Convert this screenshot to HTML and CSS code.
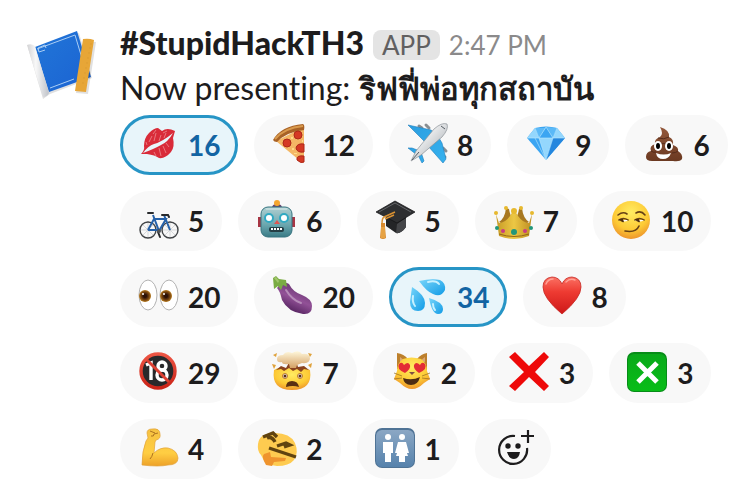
FILE: index.html
```html
<!DOCTYPE html>
<html lang="en">
<head>
<meta charset="utf-8">
<meta name="viewport" content="width=device-width, initial-scale=1">
<title>#StupidHackTH3</title>
<link rel="stylesheet" href="styles.css">
</head>
<body>
<svg class="defs" aria-hidden="true">
  <defs>
    <linearGradient id="blueprint" x1="0" y1="0" x2="1" y2="1"><stop offset="0" stop-color="#2176d8"/><stop offset="1" stop-color="#1b62d2"/></linearGradient>
    <linearGradient id="roll" x1="0" y1="0" x2="1" y2="0"><stop offset="0" stop-color="#d2d2d4"/><stop offset=".4" stop-color="#f8f8f8"/><stop offset="1" stop-color="#bfc2c8"/></linearGradient>
    <linearGradient id="wing" x1="0" y1="0" x2="1" y2="1"><stop offset="0" stop-color="#2b9ee0"/><stop offset="1" stop-color="#35b1ee"/></linearGradient>
    <linearGradient id="hull" x1="0" y1="0" x2="1" y2="1"><stop offset=".3" stop-color="#f4f5f6"/><stop offset="1" stop-color="#9aa0a5"/></linearGradient>
    <linearGradient id="poop" x1="0" y1="0" x2="0" y2="1"><stop offset="0" stop-color="#93583b"/><stop offset="1" stop-color="#6b3921"/></linearGradient>
    <linearGradient id="robot" x1="0" y1="0" x2="0" y2="1"><stop offset="0" stop-color="#b0d0d2"/><stop offset=".6" stop-color="#6aa6ae"/><stop offset="1" stop-color="#397a85"/></linearGradient>
    <linearGradient id="gold" x1="0" y1="0" x2="1" y2="0"><stop offset="0" stop-color="#c79a27"/><stop offset=".5" stop-color="#ecc744"/><stop offset="1" stop-color="#bd8d22"/></linearGradient>
    <radialGradient id="face" cx=".5" cy=".3" r=".7"><stop offset="0" stop-color="#ffec62"/><stop offset=".65" stop-color="#fdca35"/><stop offset="1" stop-color="#ed952c"/></radialGradient>
    <radialGradient id="iris"><stop offset=".25" stop-color="#2b1007"/><stop offset=".65" stop-color="#71400f"/><stop offset="1" stop-color="#b77b20"/></radialGradient>
    <linearGradient id="eggplant" x1=".7" y1=".1" x2=".3" y2=".9"><stop offset="0" stop-color="#65346f"/><stop offset=".5" stop-color="#925197"/><stop offset="1" stop-color="#51215c"/></linearGradient>
    <linearGradient id="drop" x1="0" y1="0" x2="1" y2="1"><stop offset="0" stop-color="#79d6fa"/><stop offset="1" stop-color="#119be6"/></linearGradient>
    <linearGradient id="heart" x1="0" y1="0" x2="0" y2="1"><stop offset="0" stop-color="#fb7163"/><stop offset=".4" stop-color="#ee3b32"/><stop offset="1" stop-color="#ce1718"/></linearGradient>
    <linearGradient id="ban" x1="0" y1="0" x2="0" y2="1"><stop offset="0" stop-color="#ed5544"/><stop offset="1" stop-color="#cb2418"/></linearGradient>
    <linearGradient id="cloud" x1="0" y1="0" x2="0" y2="1"><stop offset="0" stop-color="#fff8dc"/><stop offset="1" stop-color="#d4a064"/></linearGradient>
    <linearGradient id="green" x1="0" y1="0" x2="0" y2="1"><stop offset="0" stop-color="#09a91a"/><stop offset="1" stop-color="#08bd17"/></linearGradient>
    <linearGradient id="arm" x1="0" y1="0" x2="0" y2="1"><stop offset="0" stop-color="#f6c241"/><stop offset=".65" stop-color="#ffce43"/><stop offset="1" stop-color="#eda129"/></linearGradient>
    <linearGradient id="sign" x1="0" y1="0" x2="0" y2="1"><stop offset="0" stop-color="#8ba7c4"/><stop offset="1" stop-color="#5682ac"/></linearGradient>
  </defs>
</svg>

<main class="message">
  <svg class="avatar" viewBox="0 0 72 72" aria-hidden="true">
    <path class="shade" d="M4 21 12 21 55 6 68 51 26 67 19 72Z"/>
    <path fill="url(#blueprint)" d="M11 20 53 4 67 50 25 65Z"/>
    <path fill="none" stroke="#a9cdf4" d="M13 22 51 8 63 48M22 21l-1-3-7 3 1 4 6-2M26 61l24-9"/>
    <path fill="url(#roll)" d="M3 18q4-2 8 1l14 47q-2 4-6 4Z"/>
    <path class="shade" d="M60 14l12 1-8 52-12-1Z"/>
    <path fill="#e7a637" d="M59 12q6-1 11 1l-8 52-11-1Z"/>
    <path stroke="#d99a30" stroke-width=".7" d="M68 17h-2m1 4h-2m1 5h-2m1 5h-2m1 5h-2m1 5h-2m1 5h-2m1 5h-2m1 5h-2"/>
  </svg>

  <div class="content">
    <header class="meta">
      <h1 class="author">#StupidHackTH3</h1>
      <span class="badge">APP</span>
      <time class="time" datetime="14:47">2:47 PM</time>
    </header>
    <p class="text">Now presenting: <strong class="thai" lang="th">ริฟฟี่พ่อทุกสถาบัน</strong></p>

    <div class="reactions">
      <button class="pill selected" type="button" aria-pressed="true">
        <svg class="icon" viewBox="0 0 40 40" aria-hidden="true">
          <path fill="#d92b39" d="M3 30Q7 26 6 22 6 14 11 9 16 4 20 4L24 7Q29 3 37 7L35 14Q37 23 33 28 27 35 21 34 17 31 9 30Z"/>
          <path fill="#e8f5fa" d="M5 29Q10 22 16 20 24 18 35 9 30 18 23 21 16 25 5 29Z"/>
          <path fill="none" stroke="#ec8a8f" stroke-width=".8" d="M11 18l3-6m2 5 2-8m3 8 2-6m3 3 2-5m-12 19 2 4m3-8 2 8m2-10 3 7m0-10 3 4M9 21l-1-3m7-8 3-4m7 3 4-2"/>
        </svg><span>16</span>
      </button>
      <button class="pill" type="button" aria-pressed="false">
        <svg class="icon" viewBox="0 0 40 40" aria-hidden="true">
          <path fill="#f4b765" d="M4 17 32 3V38Q30 40 27 36Z"/>
          <path fill="#a86226" d="M1 16Q9 2 31 0q2 1 1 6Q14 8 5 18 2 18 1 16Z"/>
          <path fill="none" stroke="#d99a4d" stroke-width="2" d="M3 15Q12 4 31 2"/>
          <g fill="#d53924" stroke="#ae2819"><circle cx="15" cy="19" r="4"/><circle cx="26" cy="11" r="4"/><path d="M32 20q-7-1-8 4 1 5 8 4ZM32 32q-8-1-7 4 4 4 7 2Z"/></g>
          <path fill="#ffda86" d="M19 13h2v2h-2zM20 24h2v2h-2zM30 16h1v2h-1zM22 29h3v1h-3z"/>
        </svg><span>12</span>
      </button>
      <button class="pill" type="button" aria-pressed="false">
        <svg class="icon" viewBox="0 0 40 40" aria-hidden="true">
          <path stroke="#898e92" stroke-width="3" stroke-linecap="round" d="M12 2l3 2m4-3 3 3m14 20 3 3m-4 4 3 2"/>
          <path fill="url(#wing)" stroke="#1e7ebe" stroke-width=".6" d="M1 1 24 6 29 10 19 19ZM32 14 35 19 39 35 36 39 21 22ZM1 24h4l8 3-3 4ZM14 28l3 9-2 2-5-10Z"/>
          <path fill="url(#hull)" stroke="#8b9197" stroke-width=".7" d="M4 37 9 27 27 5Q35-2 40 0q2 5-5 13L14 31Z"/>
          <path fill="none" stroke="#565c63" d="M34 2l4 3M12 28l-7 8"/>
        </svg><span>8</span>
      </button>
      <button class="pill" type="button" aria-pressed="false">
        <svg class="icon" viewBox="0 0 40 40" aria-hidden="true">
          <path fill="#3ba5f2" d="M2 14 10 4Q21 1 32 4l8 10-19 22Z"/>
          <path fill="#94d7fd" d="M10 4l4 10H2zM32 4l-4 10h12zM14 14h14l-7 22Z"/>
          <path fill="#5bb9f7" d="M10 4h11l-7 10zM21 3l11 1-4 10z"/>
          <path fill="#2587de" d="M28 14h12L21 36z"/>
          <path fill="none" stroke="#bce9ff" stroke-width=".6" d="M2 14h38M10 4l4 10 7-11 7 11 4-10M14 14l7 22 7-22M10 14l11 22"/>
        </svg><span>9</span>
      </button>
      <button class="pill" type="button" aria-pressed="false">
        <svg class="icon" viewBox="0 0 40 40" aria-hidden="true">
          <path fill="url(#poop)" d="M17 3q10 3 9 10 5 2 4 8 6 2 5 6 5 3 4 8-2 3-9 2H9q-6 0-6-4 0-5 5-6-2-5 4-7-1-5 5-7 4-3 0-10Z"/>
          <path fill="none" stroke="#552b1a" d="M15 14q6 2 11-1M12 21q8-3 18 0M8 27q3 2 5 1m16 1q4 0 6-2"/>
          <g fill="#fff"><ellipse cx="15" cy="22" rx="4" ry="5"/><ellipse cx="26" cy="22" rx="4" ry="5"/><path d="M13 29q8 3 15 0-2 6-8 6t-7-6Z"/></g>
          <ellipse cx="15" cy="22" rx="2" ry="3"/><ellipse cx="26" cy="22" rx="2" ry="3"/>
        </svg><span>6</span>
      </button>
      <button class="pill" type="button" aria-pressed="false">
        <svg class="icon" viewBox="0 0 40 40" aria-hidden="true">
          <g fill="none" stroke="#b5b9bd" stroke-width=".5"><path d="M2 30h17M10 21v17M4 24l12 12M4 36l12-12M24 30h16M32 21v17M26 24l12 12M26 36l12-12"/></g>
          <g fill="none" stroke="#414447" stroke-width="1.4"><circle cx="10" cy="30" r="8"/><circle cx="32" cy="30" r="8"/></g>
          <path fill="none" stroke="#2661a9" stroke-width="2" d="M10 30 16 19H28L21 31 15 15M10 30h11M26 15l6 15"/>
          <path fill="none" stroke="#292b2e" stroke-width="2" stroke-linecap="round" d="M10 13h5M24 15h6l1 2M20 32l2 5"/>
          <circle cx="21" cy="31" r="2" fill="#505459"/>
        </svg><span>5</span>
      </button>
      <button class="pill" type="button" aria-pressed="false">
        <svg class="icon" viewBox="0 0 40 40" aria-hidden="true">
          <path fill="#a73544" d="M2 17h4v10H2zM35 17h4v10h-4z"/>
          <path fill="#67436e" d="M16 8q0-4 5-4t5 4z"/><circle cx="21" cy="3" r="3" fill="#f5a62f"/>
          <rect x="5" y="7" width="31" height="30" rx="7" fill="url(#robot)" stroke="#377480"/>
          <path fill="none" stroke="#d8e9e8" d="M10 9h21"/>
          <g fill="#fff" stroke="#31a9c2" stroke-width="2"><circle cx="13" cy="18" r="4"/><circle cx="28" cy="18" r="4"/></g>
          <path fill="#df5551" d="M21 20l3 4h-6z"/>
          <rect x="13" y="27" width="15" height="5" rx="2" fill="#243e45"/>
          <path stroke="#fff" stroke-width="2" stroke-dasharray="2 1" d="M15 29h12"/>
        </svg><span>6</span>
      </button>
      <button class="pill" type="button" aria-pressed="false">
        <svg class="icon" viewBox="0 0 40 40" aria-hidden="true">
          <path fill="#242527" d="M11 16 31 15V27Q26 34 21 33L11 26Z"/>
          <path fill="#444548" d="M22 24l9-6v9q-5 7-10 6z"/>
          <path fill="#2e2f31" stroke="#121314" stroke-width=".7" d="M20 1 40 12 22 23 1 12Z"/>
          <path fill="none" stroke="#656669" d="M4 12 20 3l16 9"/>
          <path fill="none" stroke="#d99132" stroke-width="1.5" d="M20 12 9 17q-2 1-2 7M19 15l-9 4"/>
          <path fill="#d98b2e" d="M6 23h4v4l1 11q-3 2-6 0l1-11Z"/><path stroke="#f4b958" d="M7 27v11m2-11v11"/>
        </svg><span>5</span>
      </button>
      <button class="pill" type="button" aria-pressed="false">
        <svg class="icon" viewBox="0 0 40 40" aria-hidden="true">
          <path fill="#a87821" d="M13 8q-1 10-7 14l15 8 15-8q-6-4-7-14l-3 1q-1 7-5 12-4-5-5-12Z"/>
          <path fill="url(#gold)" d="M3 14l3 9q6 0 11-7 2-3 3-6h2q1 3 3 6 5 7 11 7l3-9-3 22q-15 6-30 0Z"/>
          <path fill="none" stroke="#946615" d="M6 34q15 5 30 0"/>
          <g fill="#e7b92f"><circle cx="3" cy="13" r="2"/><circle cx="39" cy="13" r="2"/><circle cx="13" cy="8" r="2"/><circle cx="28" cy="8" r="2"/><circle cx="21" cy="11" r="3"/></g>
          <g fill="#22967a"><circle cx="4" cy="28" r="2"/><circle cx="21" cy="32" r="3"/><circle cx="38" cy="28" r="2"/></g>
          <g fill="#ca3c82"><circle cx="10" cy="31" r="2"/><circle cx="32" cy="31" r="2"/></g>
        </svg><span>7</span>
      </button>
      <button class="pill" type="button" aria-pressed="false">
        <svg class="icon" viewBox="0 0 40 40" aria-hidden="true">
          <circle cx="20" cy="20" r="19" fill="url(#face)"/>
          <g fill="none" stroke="#664016" stroke-width="1.6" stroke-linecap="round"><path d="M7 15q5-4 9-1M25 13q5-3 9 2M14 31q11 2 14-5"/><path d="M8 20q4-3 9 0M24 20q4-3 9 0"/></g>
          <path fill="#fff" d="M9 20h8q-3 3-8 0ZM24 20h9q-4 3-9 0Z"/><path fill="#4e2d0b" d="M8 19h4l1 3q-3 1-5-3ZM24 19h4l1 3q-3 1-5-3Z"/>
        </svg><span>10</span>
      </button>
      <button class="pill" type="button" aria-pressed="false">
        <svg class="icon" viewBox="0 0 40 40" aria-hidden="true">
          <g fill="#fff" stroke="#b2b2b2"><ellipse cx="10" cy="19" rx="9" ry="15"/><ellipse cx="31" cy="19" rx="9" ry="15"/></g>
          <g fill="url(#iris)"><circle cx="7" cy="20" r="6"/><circle cx="28" cy="20" r="6"/></g>
          <g fill="#fff"><circle cx="5" cy="18" r="1"/><circle cx="26" cy="18" r="1"/></g>
        </svg><span>20</span>
      </button>
      <button class="pill" type="button" aria-pressed="false">
        <svg class="icon" viewBox="0 0 40 40" aria-hidden="true">
          <path fill="url(#eggplant)" d="M5 12Q11 4 17 8q4 8 13 11 10 4 10 11 0 9-9 8Q16 36 10 24Q8 15 5 12Z"/>
          <path fill="none" stroke="#b58ab8" stroke-width="2" stroke-linecap="round" d="M14 14q6 10 15 13"/>
          <path fill="#7aac43" d="M1 2 4 0 7 3 14 4 15 11 11 9 9 14 6 10 2 13Z"/><path fill="#a3c66c" d="M2 2l2-1 3 4-1 2Z"/>
        </svg><span>20</span>
      </button>
      <button class="pill selected" type="button" aria-pressed="true">
        <svg class="icon" viewBox="0 0 40 40" aria-hidden="true">
          <g fill="url(#drop)"><path d="M12 5Q25 2 33 4q6 3 5 10-4 8-12 4-6-2-14-13Z"/><path d="M5 11Q18 19 18 27q0 8-7 8-8 0-8-9Z"/><path d="M22 22Q36 26 36 33q0 5-5 5-6 0-9-16Z"/></g>
          <g fill="none" stroke="#c7f1ff" stroke-width="2" stroke-linecap="round"><path d="M21 6q8-2 11 2M6 20q-1 6 2 10M26 28q0 4 2 6"/></g>
        </svg><span>34</span>
      </button>
      <button class="pill" type="button" aria-pressed="false">
        <svg class="icon" viewBox="0 0 40 40" aria-hidden="true">
          <path fill="url(#heart)" stroke="#c72a25" stroke-width=".8" d="M21 38Q2 22 2 11 2 2 11 1q7 0 10 7 3-7 10-7 9 1 9 10Q40 22 21 38Z"/>
          <path fill="none" stroke="#ffa297" stroke-width="1.5" stroke-linecap="round" d="M5 8q2-5 7-5m13 3q4-4 9-2"/>
        </svg><span>8</span>
      </button>
      <button class="pill" type="button" aria-pressed="false">
        <svg class="icon" viewBox="0 0 40 40" aria-hidden="true">
          <circle cx="20" cy="19" r="17" fill="#29292b"/>
          <g fill="none" stroke="#fff" stroke-width="3.4"><path d="M8 13l5-2v17"/><circle cx="24" cy="14" r="4"/><circle cx="24" cy="23" r="5"/></g>
          <path stroke="#dd4032" stroke-width="3" d="M8 7l24 24"/>
          <circle cx="20" cy="19" r="17" fill="none" stroke="url(#ban)" stroke-width="3.4"/>
        </svg><span>29</span>
      </button>
      <button class="pill" type="button" aria-pressed="false">
        <svg class="icon" viewBox="0 0 40 40" aria-hidden="true">
          <path fill="url(#face)" d="M2 18q6-4 10 0 5-4 10 0 8-4 16 0 3 20-18 20T2 18Z"/>
          <path fill="#8a431f" d="M4 18l5-4 5 2 4-7h6l2 6 6-1 5 4-5-1-3 3-4-3-4 2-4-3-5 3-3-2Z"/>
          <path fill="url(#cloud)" d="M5 7q0-4 6-4 3-5 9-2 7-4 10 1 7-1 8 4 0 6-8 5l-5 2-1 3h-6l-1-4q-7 1-7-2-5 1-5-3Z"/>
          <path fill="#dfa23c" d="M1 3l4-2-1 4ZM36 1l4 1-2 3ZM0 12l4 1-2 4ZM36 13l4-2-1 5Z"/>
          <g fill="#fff" stroke="#bd7624"><circle cx="13" cy="24" r="2.5"/><circle cx="28" cy="24" r="2.5"/></g>
          <g fill="#593012"><circle cx="13" cy="24" r="1.5"/><circle cx="28" cy="24" r="1.5"/><path d="M14 35q0-6 6-6t7 6q-6-2-13 0Z"/></g>
        </svg><span>7</span>
      </button>
      <button class="pill" type="button" aria-pressed="false">
        <svg class="icon" viewBox="0 0 40 40" aria-hidden="true">
          <path fill="#bd802c" d="M6 17V1q7 1 11 6h9q4-5 10-6v17Z"/>
          <path fill="#dba875" d="M9 10V5l5 4ZM34 10V5l-5 4Z"/>
          <path fill="url(#face)" d="M12 7q8-3 18 0 6 4 6 12l3 8-6 4q-6 6-12 6T9 31l-6-4 3-8Q6 11 12 7Z"/>
          <path fill="#e32d35" d="M14 21Q5 17 8 12q3-3 5 1 4-4 6 0 1 4-5 8ZM28 21q-6-4-5-8 2-4 6 0 2-4 5-1 3 5-6 9Z"/>
          <path fill="#805044" d="M18 20h6l-3 3Z"/><path fill="#4c2c13" d="M12 26q9 3 17-1-2 8-9 8t-8-7Z"/>
          <path fill="none" stroke="#92691f" stroke-width=".7" d="M3 21l8 3m-8 3 8-1m28-5-8 3m8 3-8-1"/>
        </svg><span>2</span>
      </button>
      <button class="pill" type="button" aria-pressed="false">
        <svg class="icon" viewBox="0 0 40 40" aria-hidden="true"><path fill="#ee0909" d="M6 0 20 14 35 0 40 5 26 20 40 34 35 39 20 25 6 39 0 34 15 20 0 5Z"/></svg><span>3</span>
      </button>
      <button class="pill" type="button" aria-pressed="false">
        <svg class="icon" viewBox="0 0 40 40" aria-hidden="true">
          <rect width="40" height="40" rx="7" fill="#078c18"/><rect x="1" y="2" width="38" height="37" rx="6" fill="url(#green)"/>
          <path fill="none" stroke="#fff" stroke-width="5" d="M11 11l19 19M30 11 11 30"/>
        </svg><span>3</span>
      </button>
      <button class="pill" type="button" aria-pressed="false">
        <svg class="icon" viewBox="0 0 40 40" aria-hidden="true">
          <path fill="url(#arm)" stroke="#e1a239" stroke-width=".7" d="M9 5q0-4 5-4 8-1 8 5 1 5-4 6l-1 2-1 11q6-6 14-5 9 2 10 10 0 7-10 7-9 2-26 0Q4 23 8 13l2-3Z"/>
          <path fill="none" stroke="#ad7320" d="M13 8q3 1 3-2l4-1M12 3l5 2M15 25q-1 4-3 6"/>
        </svg><span>4</span>
      </button>
      <button class="pill" type="button" aria-pressed="false">
        <svg class="icon" viewBox="0 0 40 40" aria-hidden="true">
          <path fill="#fecb50" d="M2 16Q3 5 19 5q15 0 20 10 4 10-1 17-5 6-17 6T5 27Q1 23 2 16Z"/>
          <path fill="#ef942e" d="M8 26l6-2 1 5 15 1-1 3-11 1-2 4-6-1q-5-8-2-11Z"/>
          <g fill="none" stroke="#604310" stroke-width="3.4"><path d="M7 9l10-4 4 4M11 10q5-2 8 4M21 18l9-3 4 2-6 2M13 20l27 9"/></g>
        </svg><span>2</span>
      </button>
      <button class="pill" type="button" aria-pressed="false">
        <svg class="icon" viewBox="0 0 40 40" aria-hidden="true">
          <rect width="40" height="40" rx="7" fill="#4f7395"/><rect x="1" y="2" width="38" height="37" rx="6" fill="url(#sign)"/>
          <g fill="#fff"><circle cx="13" cy="9" r="3"/><circle cx="27" cy="9" r="3"/><path d="M9 14h9v11h-2v9h-6v-9H8V14ZM23 14h8l3 11h-2l-1-3 2 6h-3v6h-6v-6h-3l2-6-1 3h-2Z"/></g>
        </svg><span>1</span>
      </button>
      <button class="pill add" type="button" aria-label="Add reaction">
        <svg class="icon" viewBox="0 0 40 40" aria-hidden="true">
          <g fill="none" stroke="#1d1c1d" stroke-width="2.2"><path d="M22 8a14 14 0 1 0 12 12" /><path d="M35 2v13M28 8h13"/></g>
          <g fill="#1d1c1d"><circle cx="15" cy="18" r="2.7"/><circle cx="25" cy="18" r="2.7"/><path d="M14 24h13q-1 7-6 7t-7-7Z"/></g>
        </svg>
      </button>
    </div>
  </div>
</main>
</body>
</html>
```
FILE: styles.css
```css
* {
  box-sizing: border-box;
}

body {
  margin: 0;
  background: #fff;
  color: #1d1c1d;
  font-family: Lato, "Noto Sans", "Liberation Sans", sans-serif;
  font-size: 32px;
  line-height: 44px;
  font-variant-ligatures: none;
}

.defs {
  position: absolute;
  width: 0;
  height: 0;
}

.message {
  display: flex;
  gap: 24px;
  padding: 22px 20px 16px 24px;
}

.avatar {
  flex: none;
  width: 72px;
  height: 72px;
  margin-top: 5px;
  overflow: visible;
}

.shade {
  fill: #000;
  opacity: 0.12;
}

.content {
  flex: 1;
  min-width: 0;
}

.meta {
  display: flex;
  align-items: baseline;
  flex-wrap: wrap;
  gap: 0 9px;
  line-height: 42px;
}

.author {
  margin: 0;
  font-size: 32px;
  font-weight: 900;
}

.badge {
  padding: 0 9px;
  border-radius: 8px;
  background: #e4e4e4;
  color: #616061;
  font-size: 26px;
  line-height: 30px;
}

.time {
  color: #8b8a8b;
  font-size: 26px;
}

.text {
  margin: 0 0 5px;
}

.thai {
  font-size: 31px;
  font-weight: 700;
  line-height: 1;
}

.reactions {
  display: flex;
  flex-wrap: wrap;
  gap: 16px;
}

.pill {
  display: flex;
  align-items: center;
  gap: 10px;
  height: 60px;
  padding: 0 15px;
  border: 3px solid #f8f8f8;
  border-radius: 30px;
  background: #f8f8f8;
  color: #1d1c1d;
  font-family: inherit;
  font-size: 28px;
  font-weight: 700;
  line-height: 36px;
  cursor: pointer;
}

.pill.selected {
  border-color: #2795c6;
  background: #e8f5fa;
  color: #1264a3;
}

.icon {
  flex: none;
  width: 40px;
  height: 40px;
  margin-bottom: 2px;
  overflow: visible;
}
```
